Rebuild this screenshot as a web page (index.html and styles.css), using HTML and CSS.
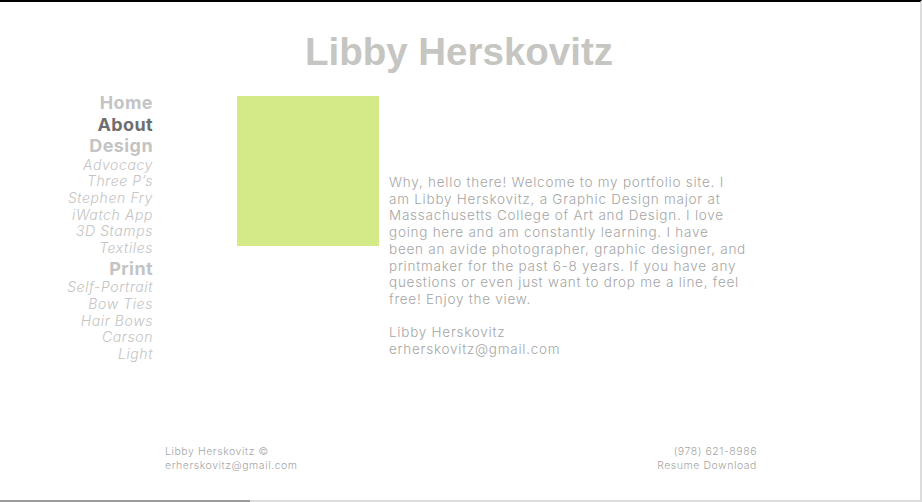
FILE: index.html
```html
<!DOCTYPE html>
<html lang="en">
<head>
<meta charset="utf-8">
<title>Libby Herskovitz</title>
<link rel="stylesheet" href="styles.css">
</head>
<body>
<div class="frame">
  <div class="page">
    <header class="masthead">
      <h1 class="title">Libby Herskovitz</h1>
    </header>
    <main class="main">
      <nav class="nav">
        <a class="nav-head" href="#">Home</a>
        <a class="nav-head nav-current" href="#">About</a>
        <a class="nav-head" href="#">Design</a>
        <a class="nav-sub" href="#">Advocacy</a>
        <a class="nav-sub" href="#">Three P’s</a>
        <a class="nav-sub" href="#">Stephen Fry</a>
        <a class="nav-sub" href="#">iWatch App</a>
        <a class="nav-sub" href="#">3D Stamps</a>
        <a class="nav-sub" href="#">Textiles</a>
        <a class="nav-head nav-print" href="#">Print</a>
        <a class="nav-sub" href="#">Self-Portrait</a>
        <a class="nav-sub" href="#">Bow Ties</a>
        <a class="nav-sub" href="#">Hair Bows</a>
        <a class="nav-sub" href="#">Carson</a>
        <a class="nav-sub" href="#">Light</a>
      </nav>
      <div class="photo"></div>
      <section class="about">
        <p>Why, hello there! Welcome to my portfolio site. I am Libby Herskovitz, a Graphic Design major at Massachusetts College of Art and Design. I love going here and am constantly learning. I have been an avide photographer, graphic designer, and printmaker for the past 6-8 years. If you have any questions or even just want to drop me a line, feel free! Enjoy the view.</p>
        <p>Libby Herskovitz<br>erherskovitz@gmail.com</p>
      </section>
    </main>
    <footer class="footer">
      <div class="foot-left">Libby Herskovitz ©<br>erherskovitz@gmail.com</div>
      <div class="foot-right">(978) 621-8986<br>Resume Download</div>
    </footer>
  </div>
  <div class="scrollbar"><div class="scroll-thumb"></div></div>
</div>
</body>
</html>
```
FILE: styles.css
```css
* { box-sizing: border-box; }
html, body { margin: 0; padding: 0; background: #fff; }
body { font-family: Inter, "Noto Sans", sans-serif; }

.frame {
  width: 922px;
  height: 502px;
  border-top: 2px solid #000;
  border-right: 2px solid #dcdcdc;
  display: flex;
  flex-direction: column;
  overflow: hidden;
}
.page { flex: 1; display: flex; flex-direction: column; }

.masthead { display: flex; justify-content: center; padding-top: 26px; height: 90px; }
.title {
  margin: 0;
  font-family: "Liberation Sans", Arial, sans-serif;
  font-weight: bold;
  font-size: 38.5px;
  line-height: 48px;
  color: #c5c5c1;
  padding-right: 2px;
}

.main { display: flex; align-items: flex-start; height: 338px; }
.nav {
  width: 153px;
  padding-top: 1px;
  display: flex;
  flex-direction: column;
  align-items: flex-end;
  text-align: right;
}
.nav a { text-decoration: none; white-space: nowrap; }
.nav-head { font-size: 18px; font-weight: 700; line-height: 20.5px; margin-top: 1px; letter-spacing: 0.4px; color: #c4c4c4; }
.nav-head:first-child { margin-top: 0; }
.nav .nav-current { color: #6e6e6e; }
.nav .nav-print { margin-top: 2px; }
.nav-sub { font-size: 14px; font-style: italic; line-height: 16.7px; letter-spacing: 0.6px; color: #c4c4c4; font-weight: 300; }

.photo { width: 142px; height: 150px; background: #d4ea88; margin-left: 84px; margin-top: 4px; }

.about {
  width: 358px;
  margin-left: 10px;
  margin-top: 82px;
  font-size: 13.5px;
  font-weight: 300;
  letter-spacing: 0.75px;
  line-height: 16.7px;
  color: #a6a6a6;
}
.about p { margin: 0 0 16.7px; }

.footer {
  display: flex;
  justify-content: space-between;
  width: 592px;
  margin-left: 165px;
  font-size: 10.5px;
  font-weight: 300;
  letter-spacing: 0.55px;
  line-height: 14px;
  color: #a6a6a6;
  padding-top: 15px;
}
.foot-right { text-align: right; }

.scrollbar { height: 2px; background: #dcdcdc; display: flex; }
.scroll-thumb { width: 250px; background: #9a9a9a; }
```
